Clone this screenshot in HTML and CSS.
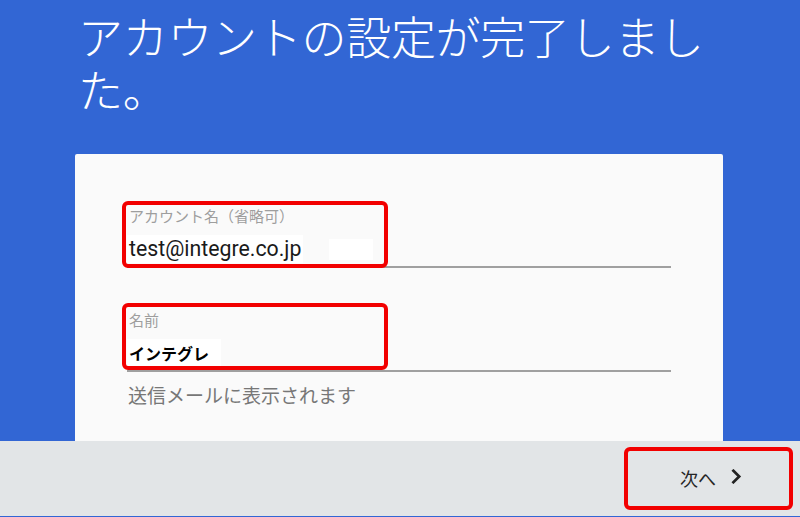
FILE: index.html
```html
<!DOCTYPE html>
<html lang="ja">
<head>
<meta charset="utf-8">
<title>アカウントの設定が完了しました。</title>
<link rel="stylesheet" href="styles.css">
</head>
<body>
<div class="page">
  <h1 class="title">アカウントの設定が完了しました。</h1>
  <div class="card">
    <div class="field">
      <div class="field-label">アカウント名（省略可）</div>
      <div class="field-value"><span class="value-text">test@integre.co.jp</span><span class="patch"></span></div>
      <div class="mark mark-1"></div>
    </div>
    <div class="field field-2">
      <div class="field-label">名前</div>
      <div class="field-value"><span class="value-text value-bold">インテグレ</span></div>
      <div class="mark mark-2"></div>
    </div>
    <div class="helper">送信メールに表示されます</div>
  </div>
  <div class="footer">
    <div class="next-btn">
      <span class="next-text">次へ</span>
      <svg class="chev" width="11" height="15" viewBox="0 0 11 15"><path d="M2.4 1.8 L8.2 7.5 L2.4 13.2" fill="none" stroke="#222" stroke-width="2.7" stroke-linecap="square" stroke-linejoin="miter"/></svg>
      <div class="mark mark-btn"></div>
    </div>
  </div>
</div>
</body>
</html>
```

FILE: styles.css
```css
html, body {
  margin: 0;
  padding: 0;
}
body {
  background: #3266d4;
  font-family: Roboto, "Noto Sans CJK JP", sans-serif;
  width: 800px;
  height: 517px;
  overflow: hidden;
}
.page {
  display: flex;
  flex-direction: column;
  height: 516px;
}
.title {
  margin: 9px 0 39px 78px;
  width: 650px;
  font-family: "Noto Sans CJK JP", sans-serif;
  font-weight: 300;
  font-size: 45px;
  line-height: 53px;
  color: #ffffff;
  letter-spacing: -0.3px;
}
.card {
  flex: 1;
  margin: 0 77px 0 75px;
  background: #fafafa;
  border-radius: 2px 2px 0 0;
  padding: 52px 52px 0 52px;
  box-sizing: border-box;
}
.field {
  position: relative;
  border-bottom: 2px solid #a0a0a0;
  padding-bottom: 3px;
}
.field-2 {
  margin-top: 42px;
}
.field-label {
  font-family: "Noto Sans CJK JP", sans-serif;
  font-size: 15px;
  line-height: 20px;
  color: #9e9e9e;
  padding-left: 2px;
}
.field-value {
  margin-top: 9px;
  height: 28px;
  line-height: 28px;
  display: flex;
  align-items: center;
}
.value-text {
  font-size: 21.3px;
  color: #1a1a1a;
  background: #ffffff;
  padding: 0 2px;
  line-height: 28px;
}
.value-bold {
  font-family: "Noto Sans CJK JP", sans-serif;
  font-weight: 700;
  font-size: 16px;
  padding-right: 12px;
  color: #000;
}
.patch {
  display: inline-block;
  width: 44px;
  height: 21px;
  margin-left: 26px;
  background: #ffffff;
}
.mark {
  position: absolute;
  border: 4px solid #f20000;
  border-radius: 6px;
  box-sizing: border-box;
  pointer-events: none;
}
.mark-1 {
  left: -5px;
  top: -5px;
  width: 266px;
  height: 67px;
}
.mark-2 {
  left: -5px;
  top: -7px;
  width: 266px;
  height: 67px;
}
.helper {
  margin-top: 11px;
  font-family: "Noto Sans CJK JP", sans-serif;
  font-size: 19px;
  line-height: 24px;
  color: #777777;
  padding-left: 1px;
}
.footer {
  height: 75px;
  background: #e2e5e7;
  display: flex;
  justify-content: flex-end;
  align-items: flex-start;
  padding-right: 7px;
  box-sizing: border-box;
}
.next-btn {
  position: relative;
  margin-top: 6px;
  width: 169px;
  height: 63px;
  display: flex;
  align-items: center;
  justify-content: flex-start;
  padding-left: 56px;
  box-sizing: border-box;
  gap: 15px;
}
.next-text {
  font-family: "Noto Sans CJK JP", sans-serif;
  font-size: 18px;
  color: #262626;
  line-height: 24px;
  margin-top: -2px;
}
.chev {
  margin-top: -4px;
}
.mark-btn {
  left: 0;
  top: 0;
  width: 169px;
  height: 63px;
}
```
